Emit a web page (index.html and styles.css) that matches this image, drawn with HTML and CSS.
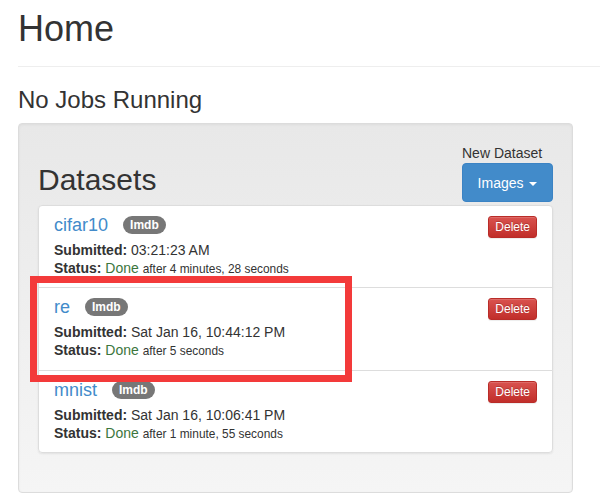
FILE: index.html
```
<!DOCTYPE html>
<html>
<head>
<meta charset="utf-8">
<title>Home</title>
<link rel="stylesheet" href="styles.css">
</head>
<body>
<div class="container">
  <div class="page-header">
    <h1>Home</h1>
  </div>
  <h3 class="jobs">No Jobs Running</h3>
  <div class="well">
    <div class="new-dataset">
      <div class="new-label">New Dataset</div>
      <button class="btn-images">Images <span class="caret"></span></button>
    </div>
    <h2 class="datasets">Datasets</h2>
    <div class="list-group">
      <div class="list-group-item">
        <button class="btn-delete">Delete</button>
        <h4 class="item-heading"><a href="#" class="item-link">cifar10</a> <span class="badge">Imdb</span></h4>
        <p class="item-text"><b>Submitted:</b> 03:21:23 AM</p>
        <p class="item-text"><b>Status:</b> <span class="done">Done</span> <small class="after">after 4 minutes, 28 seconds</small></p>
      </div>
      <div class="list-group-item">
        <button class="btn-delete">Delete</button>
        <h4 class="item-heading"><a href="#" class="item-link">re</a> <span class="badge">Imdb</span></h4>
        <p class="item-text"><b>Submitted:</b> Sat Jan 16, 10:44:12 PM</p>
        <p class="item-text"><b>Status:</b> <span class="done">Done</span> <small class="after">after 5 seconds</small></p>
      </div>
      <div class="list-group-item">
        <button class="btn-delete">Delete</button>
        <h4 class="item-heading"><a href="#" class="item-link">mnist</a> <span class="badge">Imdb</span></h4>
        <p class="item-text"><b>Submitted:</b> Sat Jan 16, 10:06:41 PM</p>
        <p class="item-text"><b>Status:</b> <span class="done">Done</span> <small class="after">after 1 minute, 55 seconds</small></p>
      </div>
    </div>
  </div>
</div>
<div class="highlight"></div>
</body>
</html>
```
FILE: styles.css
```
* { box-sizing: border-box; }
html, body { margin: 0; padding: 0; }
body {
  font-family: "Liberation Sans", Arial, Helvetica, sans-serif;
  font-size: 14px;
  line-height: 20px;
  color: #333;
  background: #fff;
  width: 600px;
  height: 493px;
  overflow: hidden;
  position: relative;
}
.container { padding-left: 18px; }
.page-header {
  margin-top: 9px;
  padding-bottom: 17px;
  border-bottom: 1px solid #eee;
}
.page-header h1 {
  margin: 0;
  font-size: 36px;
  font-weight: 500;
  line-height: 39.6px;
}
.jobs {
  margin: 20px 0 10px;
  font-size: 24px;
  font-weight: 500;
  line-height: 26.4px;
}
.well {
  margin-right: 27px;
  padding: 19px;
  border: 1px solid #dcdcdc;
  border-radius: 4px;
  background: linear-gradient(to bottom, #e8e8e8 0, #f5f5f5 100%);
  box-shadow: inset 0 1px 3px rgba(0,0,0,.05), 0 1px 0 rgba(255,255,255,.1);
}
.new-dataset { float: right; width: 91px; }
.new-label { font-size: 14px; line-height: 20px; }
.btn-images {
  display: block;
  width: 91px;
  height: 39px;
  padding: 0 14px;
  margin: 0;
  border: 1px solid #3b83c4;
  border-radius: 4px;
  background: #428bca;
  color: #fff;
  font-family: inherit;
  font-size: 14px;
  line-height: 20px;
  text-align: center;
  white-space: nowrap;
}
.caret {
  display: inline-block;
  width: 0;
  height: 0;
  margin-left: 2px;
  vertical-align: middle;
  border-top: 4px solid #fff;
  border-left: 4px solid transparent;
  border-right: 4px solid transparent;
}
.datasets {
  margin: 20px 0 9px;
  font-size: 30px;
  font-weight: 500;
  line-height: 33px;
}
.list-group {
  margin-bottom: 20px;
  border-radius: 4px;
  box-shadow: 0 1px 2px rgba(0,0,0,.075);
}
.list-group-item {
  padding: 10px 15px;
  margin-bottom: -1px;
  background: #fff;
  border: 1px solid #ddd;
}
.list-group-item:first-child { border-radius: 4px 4px 0 0; }
.list-group-item:last-child { border-radius: 0 0 4px 4px; margin-bottom: 0; }
.btn-delete {
  float: right;
  height: 22px;
  padding: 1px 6px;
  margin: 0;
  font-family: inherit;
  font-size: 12px;
  line-height: 18px;
  color: #fff;
  border: 1px solid #b92c28;
  border-radius: 3px;
  background: linear-gradient(to bottom, #d9534f 0, #c12e2a 100%);
  text-shadow: 0 -1px 0 rgba(0,0,0,.2);
  box-shadow: inset 0 1px 0 rgba(255,255,255,.15), 0 1px 1px rgba(0,0,0,.075);
}
.item-heading {
  margin: 0 0 5px;
  font-size: 18px;
  font-weight: 500;
  line-height: 19.8px;
}
.item-link { color: #428bca; text-decoration: none; }
.badge {
  display: inline-block;
  margin-left: 10px;
  padding: 3px 7px;
  font-size: 12px;
  font-weight: bold;
  line-height: 12px;
  color: #fff;
  background: #777;
  border-radius: 10px;
  vertical-align: 2px;
}
.item-text {
  margin: 0;
  line-height: 1.3;
}
.done { color: #3c763d; }
.after { font-size: 85%; }
.highlight {
  position: absolute;
  left: 30px;
  top: 276px;
  width: 322px;
  height: 106px;
  border: 7px solid #f33a3a;
}
```
